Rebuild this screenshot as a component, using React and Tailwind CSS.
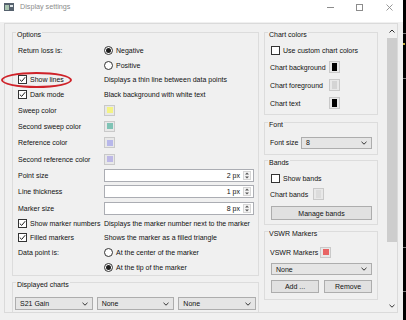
import React from 'react';

const Check = ({ on }) => (
  <span className="flex h-[9px] w-[9px] shrink-0 items-center justify-center border border-[#333333] bg-white">
    {on && (
      <svg width="7" height="7" viewBox="0 0 7 7">
        <path d="M0.8 3.6 L2.7 5.4 L6.2 1.2" fill="none" stroke="#1e1e1e" strokeWidth="1" />
      </svg>
    )}
  </span>
);

const Radio = ({ on }) => (
  <span className="flex h-[9px] w-[9px] shrink-0 items-center justify-center rounded-full border border-[#333333] bg-white">
    {on && <span className="h-[5px] w-[5px] rounded-full bg-[#1e1e1e]" />}
  </span>
);

const Swatch = ({ inner, tall }) => (
  <span
    className={`flex shrink-0 items-center justify-center border border-[#c9c9c9] bg-[#e8e8e8] ${
      tall ? 'h-[12px] w-[11px]' : 'h-[11px] w-[11px]'
    }`}
  >
    <span className={`${inner} ${tall ? 'h-[8px] w-[5px]' : 'h-[6px] w-[6px]'}`} />
  </span>
);

const Chevron = ({ up }) => (
  <svg width="6" height="4" viewBox="0 0 6 4">
    <path
      d={up ? 'M0.5 3.5 L3 1 L5.5 3.5' : 'M0.5 0.8 L3 3.2 L5.5 0.8'}
      fill="none"
      stroke="#333"
      strokeWidth="1"
    />
  </svg>
);

const Combo = ({ text, className = '' }) => (
  <div className={`flex items-center justify-between border border-[#adadad] bg-[#e5e5e5] px-[4px] ${className}`}>
    <span>{text}</span>
    <Chevron />
  </div>
);

const Button = ({ children, className = '' }) => (
  <div className={`flex items-center justify-center border border-[#adadad] bg-[#e1e1e1] ${className}`}>
    {children}
  </div>
);

const Spin = ({ value }) => (
  <div className="flex h-[13px] w-[150px] items-center border border-[#abadb3] bg-white">
    <span className="flex-1 pr-[3px] text-right">{value}</span>
    <span className="mr-[2px] flex h-[9px] w-[8px] items-center justify-center border border-[#d6d6d6] bg-[#f4f4f4]">
      <svg width="4" height="7" viewBox="0 0 4 7">
        <path d="M0 2.5 L2 0.5 L4 2.5 Z M0 4.5 L2 6.5 L4 4.5 Z" fill="#555" />
      </svg>
    </span>
  </div>
);

const Group = ({ title, className = '', children }) => (
  <div className={`flex flex-col border border-[#dcdcdc] ${className}`}>
    <span className="-mt-[2px] ml-[3px] h-[8px] w-fit bg-[#f0f0f0] px-[1px] leading-[8px]">{title}</span>
    {children}
  </div>
);

const Row = ({ h, label, children }) => (
  <div className={`flex items-center pl-[5px] ${h}`}>
    <span className="w-[86px] shrink-0">{label}</span>
    {children}
  </div>
);

const CheckRow = ({ h, label, children }) => (
  <div className={`flex items-center pl-[5px] ${h}`}>
    <span className="flex w-[86px] shrink-0 items-center gap-[3px] whitespace-nowrap">
      <Check on />
      {label}
    </span>
    {children}
  </div>
);

const Opt = ({ on, children }) => (
  <span className="flex items-center gap-[3px]">
    <Radio on={on} />
    {children}
  </span>
);

export default function App() {
  return (
    <div className="flex h-[320px] w-[406px] overflow-hidden bg-black text-[7px] leading-none text-[#111111] [font-family:'Liberation_Sans',Arial,sans-serif]">
      <div className="flex w-[403px] flex-col bg-[#f0f0f0]">
        {/* title bar */}
        <div className="flex h-[22px] shrink-0 items-start bg-white pt-[3px] text-[#8c8c8c]">
          <svg className="ml-[4px]" width="10" height="8" viewBox="0 0 10 8">
            <rect x="0" y="0" width="10" height="8" fill="#56626e" />
            <rect x="1" y="2" width="4" height="5" fill="#a9c4b0" />
            <rect x="6" y="2" width="3" height="2" fill="#dfe6ea" />
          </svg>
          <span className="ml-[6px] h-[8px] text-[7.2px] leading-[8px]">Display settings</span>
          <div className="ml-auto flex items-start">
            <span className="mt-[4px] h-px w-[7px] bg-[#8c8c8c]" />
            <span className="ml-[22px] mt-[1px] h-[7px] w-[7px] border border-[#8c8c8c]" />
            <svg className="ml-[23px] mt-[1px]" width="7" height="7" viewBox="0 0 7 7">
              <path d="M0.5 0.5 L6.5 6.5 M6.5 0.5 L0.5 6.5" stroke="#8c8c8c" strokeWidth="0.9" />
            </svg>
            <span className="w-[10px]" />
          </div>
        </div>

        {/* scroll area */}
        <div className="ml-[4px] mt-[1px] flex h-[290px] w-[394px] overflow-hidden border border-[#dadada]">
          <div className="flex flex-1 gap-[5px] overflow-hidden pl-[7px] pt-[8px]">
            {/* left column */}
            <div className="flex w-[247px] shrink-0 flex-col">
              <Group title="Options" className="h-[244px]">
                <div className="mt-[4px]" />
                <Row h="h-[15px]" label="Return loss is:">
                  <Opt on>Negative</Opt>
                </Row>
                <Row h="h-[14px]" label="">
                  <Opt>Positive</Opt>
                </Row>
                <CheckRow h="h-[15px]" label="Show lines">
                  <span>Displays a thin line between data points</span>
                </CheckRow>
                <CheckRow h="h-[15px]" label="Dark mode">
                  <span>Black background with white text</span>
                </CheckRow>
                <Row h="h-[16px]" label="Sweep color">
                  <Swatch inner="bg-[#f3f385]" />
                </Row>
                <Row h="h-[16px]" label="Second sweep color">
                  <Swatch inner="bg-[#7fc3b5]" />
                </Row>
                <Row h="h-[17px]" label="Reference color">
                  <Swatch inner="bg-[#b7b7ea]" />
                </Row>
                <Row h="h-[16px]" label="Second reference color">
                  <Swatch inner="bg-[#bdb8e6]" />
                </Row>
                <Row h="h-[16px]" label="Point size">
                  <Spin value="2 px" />
                </Row>
                <Row h="h-[17px]" label="Line thickness">
                  <Spin value="1 px" />
                </Row>
                <Row h="h-[16px]" label="Marker size">
                  <Spin value="8 px" />
                </Row>
                <CheckRow h="h-[14px]" label="Show marker numbers">
                  <span>Displays the marker number next to the marker</span>
                </CheckRow>
                <CheckRow h="h-[15px]" label="Filled markers">
                  <span>Shows the marker as a filled triangle</span>
                </CheckRow>
                <Row h="h-[15px]" label="Data point is:">
                  <Opt>At the center of the marker</Opt>
                </Row>
                <Row h="h-[15px]" label="">
                  <Opt on>At the tip of the marker</Opt>
                </Row>
              </Group>

              <Group title="Displayed charts" className="mt-[6px] h-[60px] shrink-0">
                <div className="mt-[8px] grid grid-cols-3 gap-[4px] px-[2px]">
                  <Combo text="S21 Gain" className="h-[13px]" />
                  <Combo text="None" className="h-[13px]" />
                  <Combo text="None" className="h-[13px]" />
                </div>
              </Group>
            </div>

            {/* right column */}
            <div className="flex w-[114px] shrink-0 flex-col">
              <Group title="Chart colors" className="h-[83px]">
                <div className="mt-[4px] flex h-[15px] items-center gap-[3px] pl-[6px]">
                  <Check />
                  Use custom chart colors
                </div>
                <div className="flex h-[18px] items-center pl-[5px]">
                  <span className="w-[59px]">Chart background</span>
                  <Swatch inner="bg-black" tall />
                </div>
                <div className="flex h-[18px] items-center pl-[5px]">
                  <span className="w-[59px]">Chart foreground</span>
                  <Swatch inner="bg-[#d4d4d4]" tall />
                </div>
                <div className="flex h-[18px] items-center pl-[5px]">
                  <span className="w-[59px]">Chart text</span>
                  <Swatch inner="bg-black" tall />
                </div>
              </Group>

              <Group title="Font" className="mt-[7px] h-[33px]">
                <div className="mt-[7px] flex h-[13px] items-center pl-[5px] pr-[5px]">
                  <span className="w-[31px]">Font size</span>
                  <Combo text="8" className="h-[12px] flex-1" />
                </div>
              </Group>

              <Group title="Bands" className="mt-[5px] h-[65px]">
                <div className="mt-[3px] flex h-[16px] items-center gap-[3px] pl-[6px]">
                  <Check />
                  Show bands
                </div>
                <div className="flex h-[16px] items-center pl-[5px]">
                  <span className="w-[43px]">Chart bands</span>
                  <Swatch inner="bg-[#dcdcdc]" tall />
                </div>
                <Button className="ml-[6px] mr-[5px] mt-[4px] h-[14px]">Manage bands</Button>
              </Group>

              <Group title="VSWR Markers" className="mt-[6px] h-[69px]">
                <div className="mt-[6px] flex h-[16px] items-center pl-[5px]">
                  <span className="w-[50px]">VSWR Markers</span>
                  <Swatch inner="bg-[#e86464]" />
                </div>
                <Combo text="None" className="ml-[6px] mr-[5px] mt-[3px] h-[12px]" />
                <div className="ml-[6px] mr-[5px] mt-[5px] flex gap-[5px]">
                  <Button className="h-[13px] flex-1">Add ...</Button>
                  <Button className="h-[13px] flex-1">Remove</Button>
                </div>
              </Group>
            </div>
          </div>

          {/* scrollbar */}
          <div className="flex w-[11px] shrink-0 flex-col items-center bg-[#f0f0f0]">
            <div className="flex h-[13px] w-full items-center justify-center">
              <Chevron up />
            </div>
            <div className="mt-[1px] h-[204px] w-[10px] bg-[#cdcdcd]" />
            <div className="flex-1" />
            <div className="flex h-[13px] w-full items-center justify-center">
              <Chevron />
            </div>
          </div>
        </div>
      </div>

      {/* chart canvas peeking at the right */}
      <div className="flex flex-1 flex-col">
        <div className="h-[33px]" />
        <div className="h-px bg-[#777777]" />
        <div className="h-[9px]" />
        <div className="h-[2px] w-[2px] bg-[#c8b040]" />
        <div className="h-[33px]" />
        <div className="h-px bg-[#777777]" />
        <div className="h-[168px]" />
        <div className="h-px bg-[#777777]" />
        <div className="h-[43px]" />
        <div className="h-px bg-[#777777]" />
      </div>

      {/* red annotation around "Show lines" */}
      <div className="pointer-events-none absolute left-[1px] top-[72px] h-[16px] w-[71px] rounded-[50%] border-[2.5px] border-[#cf2229]" />
    </div>
  );
}
